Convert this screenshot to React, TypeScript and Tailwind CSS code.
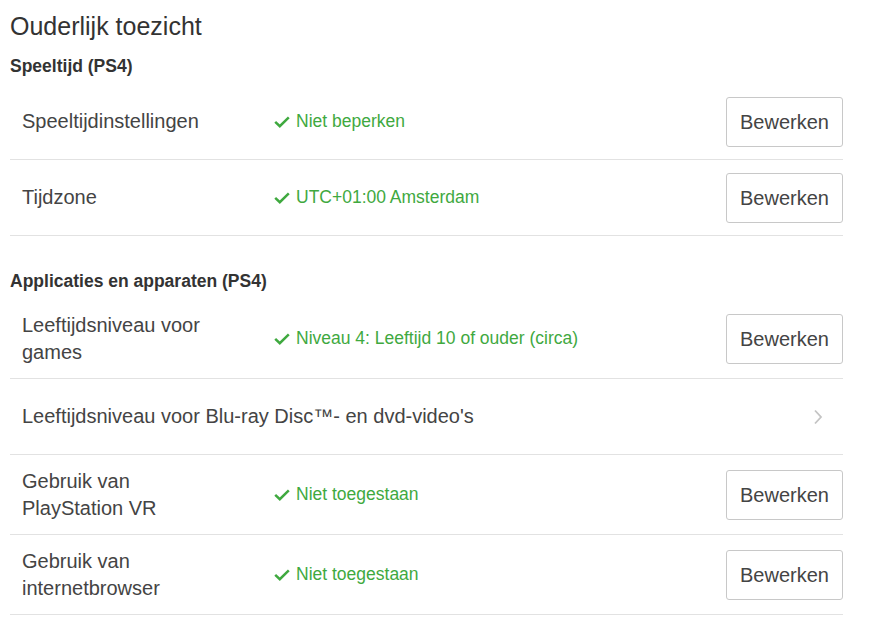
import React from "react";

type Row = {
  label: string;
  status?: string;
  action?: "edit" | "link";
};

const sections: { title: string; rows: Row[] }[] = [
  {
    title: "Speeltijd (PS4)",
    rows: [
      { label: "Speeltijdinstellingen", status: "Niet beperken", action: "edit" },
      { label: "Tijdzone", status: "UTC+01:00 Amsterdam", action: "edit" },
    ],
  },
  {
    title: "Applicaties en apparaten (PS4)",
    rows: [
      { label: "Leeftijdsniveau voor games", status: "Niveau 4: Leeftijd 10 of ouder (circa)", action: "edit" },
      { label: "Leeftijdsniveau voor Blu-ray Disc™- en dvd-video's", action: "link" },
      { label: "Gebruik van PlayStation VR", status: "Niet toegestaan", action: "edit" },
      { label: "Gebruik van internetbrowser", status: "Niet toegestaan", action: "edit" },
    ],
  },
];

function Check() {
  return (
    <svg width="16" height="12" viewBox="0 0 16 12" className="shrink-0">
      <path d="M1.2 5.8 L5.8 10.2 L14.8 1.4" fill="none" stroke="#3fa93f" strokeWidth="2.5" />
    </svg>
  );
}

function Chevron() {
  return (
    <svg width="10" height="16" viewBox="0 0 10 16">
      <path d="M2 1.5 L8 8 L2 14.5" fill="none" stroke="#c4c4c4" strokeWidth="1.8" />
    </svg>
  );
}

function SettingRow({ row }: { row: Row }) {
  if (row.action === "link") {
    return (
      <div className="flex min-h-[76px] items-center justify-between border-b border-[#e2e2e2] pl-[12px] pr-[20px]">
        <span className="text-[20px] leading-[27px] text-[#444]">{row.label}</span>
        <Chevron />
      </div>
    );
  }
  return (
    <div className="flex min-h-[76px] items-center border-b border-[#e2e2e2] py-[12.5px]">
      <div className="w-[264px] shrink-0 pl-[12px] pr-[60px] text-[20px] leading-[27px] text-[#444]">
        {row.label}
      </div>
      <div className="flex flex-1 items-center gap-[6px] text-[17.5px] text-[#3fa93f]">
        <Check />
        <span>{row.status}</span>
      </div>
      <button className="h-[50px] w-[117px] shrink-0 rounded-[3px] border border-[#c8c8c8] bg-white text-[20px] text-[#444]">
        Bewerken
      </button>
    </div>
  );
}

export default function App() {
  return (
    <div className="min-h-screen bg-white font-['Liberation_Sans',Arial,sans-serif]">
      <div className="ml-[10px] w-[833px] pt-[11px]">
        <h1 className="text-[25px] leading-[30px] text-[#333]">Ouderlijk toezicht</h1>
        {sections.map((s, i) => (
          <section key={s.title} className={i === 0 ? "mt-[13px]" : "mt-[33px]"}>
            <h2 className="text-[17.5px] font-bold leading-[24px] text-[#333]">{s.title}</h2>
            <div className="mt-[6px]">
              {s.rows.map((r) => (
                <SettingRow key={r.label} row={r} />
              ))}
            </div>
          </section>
        ))}
      </div>
    </div>
  );
}
